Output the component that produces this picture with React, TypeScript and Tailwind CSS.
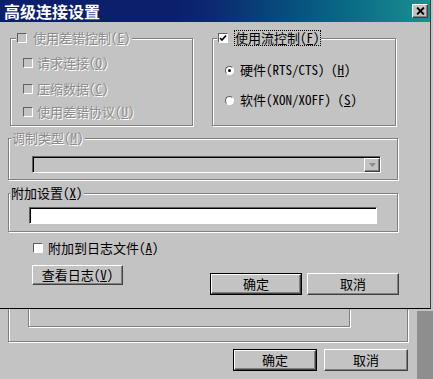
import type { ReactNode } from 'react';

const cjk = '[font-family:"Noto_Sans_Mono_CJK_SC","Noto_Sans_CJK_SC",sans-serif]';
const disabledText = 'text-[#8c8c8c] [text-shadow:1px_1px_0_#ffffff]';
const etched = 'border border-[#808080] shadow-[inset_1px_1px_0_#ffffff,1px_1px_0_#ffffff]';
const raised =
  'border border-t-white border-l-white border-r-[#404040] border-b-[#404040] shadow-[inset_-1px_-1px_0_#808080]';

function Key({ k }: { k: string }) {
  return (
    <>
      (<span className="underline">{k}</span>)
    </>
  );
}

function Check({ checked = false, disabled = false }: { checked?: boolean; disabled?: boolean }) {
  return (
    <span
      className={`relative inline-block h-[10px] w-[10px] shrink-0 border border-t-[#606060] border-l-[#606060] border-r-white border-b-white ${
        disabled ? 'bg-[#c3c3c3]' : 'bg-white'
      }`}
    >
      {checked ? (
        <svg viewBox="0 0 8 8" className="absolute inset-0 h-full w-full">
          <path d="M1 4 L3 6 L7 1.5" stroke="#000" strokeWidth="1.6" fill="none" />
        </svg>
      ) : null}
    </span>
  );
}

function Radio({ on = false }: { on?: boolean }) {
  return (
    <span className="relative inline-flex h-[9px] w-[9px] shrink-0 items-center justify-center rounded-full border border-t-[#606060] border-l-[#606060] border-r-white border-b-white bg-white">
      {on ? <span className="h-[3px] w-[3px] rounded-full bg-black" /> : null}
    </span>
  );
}

function Button({
  children,
  primary = false,
  className = '',
}: {
  children: ReactNode;
  primary?: boolean;
  className?: string;
}) {
  return (
    <div className={`${primary ? 'border border-black' : ''} ${className}`}>
      <button
        type="button"
        className={`flex h-full w-full items-center justify-center bg-[#c3c3c3] text-[13px] text-black ${raised}`}
      >
        {children}
      </button>
    </div>
  );
}

export default function App() {
  return (
    <div className={`flex h-[379px] w-[433px] flex-col overflow-hidden bg-[#c3c3c3] ${cjk}`}>
      {/* front dialog */}
      <div className="flex h-[309px] w-[431px] shrink-0 flex-col border-r border-b border-r-[#404040] border-b-black bg-[#c3c3c3]">
        <div className="flex h-[22px] shrink-0 items-center justify-between bg-gradient-to-r from-[#0b1f6c] from-40% via-[#0c2a72] to-[#1a9090] pl-[4px] pr-[2px]">
          <span className="text-[16px] leading-none font-bold text-white">高级连接设置</span>
          <span
            className={`flex h-[14px] w-[16px] items-center justify-center bg-[#c3c3c3] ${raised}`}
          >
            <svg viewBox="0 0 8 7" className="h-[8px] w-[9px]">
              <path d="M1 0.5 L7 6.5 M7 0.5 L1 6.5" stroke="#000" strokeWidth="1.8" />
            </svg>
          </span>
        </div>

        {/* row 1 */}
        <div className="mt-[9px] flex pl-[10px]">
          <fieldset className={`h-[95px] w-[183px] ${etched}`}>
            <legend className="ml-[5px] flex h-[14px] items-center gap-[6px] bg-[#c3c3c3] px-[1px] text-[13px] leading-[14px]">
              <Check disabled />
              <span className={disabledText}>
                使用差错控制<Key k="E" />
              </span>
            </legend>
            <div className="flex flex-col pl-[12px] text-[13px] leading-[14px]">
              <div className="mt-[11px] flex items-center gap-[4px]">
                <Check disabled />
                <span className={disabledText}>
                  请求连接<Key k="Q" />
                </span>
              </div>
              <div className="mt-[12px] flex items-center gap-[4px]">
                <Check disabled />
                <span className={disabledText}>
                  压缩数据<Key k="C" />
                </span>
              </div>
              <div className="mt-[9px] flex items-center gap-[4px]">
                <Check disabled />
                <span className={disabledText}>
                  使用差错协议<Key k="U" />
                </span>
              </div>
            </div>
          </fieldset>

          <fieldset className={`ml-[19px] h-[95px] w-[184px] ${etched}`}>
            <legend className="ml-[4px] flex h-[14px] items-center gap-[7px] bg-[#c3c3c3] px-[1px] text-[13px] leading-[14px] text-black">
              <Check checked />
              <span className="outline-1 outline-dotted outline-black">
                使用流控制<Key k="F" />
              </span>
            </legend>
            <div className="flex flex-col pl-[12px] text-[13px] leading-[14px] text-black">
              <div className="mt-[18px] flex items-center gap-[6px]">
                <Radio on />
                <span>
                  硬件(RTS/CTS) <Key k="H" />
                </span>
              </div>
              <div className="mt-[16px] flex items-center gap-[6px]">
                <Radio />
                <span>
                  软件(XON/XOFF) <Key k="S" />
                </span>
              </div>
            </div>
          </fieldset>
        </div>

        {/* modulation */}
        <fieldset className={`mt-[5px] ml-[8px] h-[49px] w-[390px] ${etched}`}>
          <legend className="ml-[2px] h-[14px] bg-[#c3c3c3] px-[1px] text-[13px] leading-[14px]">
            <span className={disabledText}>
              调制类型<Key k="M" />
            </span>
          </legend>
          <div className="mt-[11px] ml-[23px] flex h-[17px] w-[349px] border border-t-[#606060] border-l-[#606060] border-r-white border-b-white bg-[#c3c3c3] shadow-[inset_1px_1px_0_#000]">
            <div className="flex-1" />
            <div className={`mt-[1px] flex h-[14px] w-[16px] items-center justify-center bg-[#c3c3c3] ${raised}`}>
              <svg viewBox="0 0 7 4" className="h-[4px] w-[7px]">
                <path d="M0 0 H7 L3.5 4 Z" fill="#8c8c8c" />
              </svg>
            </div>
          </div>
        </fieldset>

        {/* extra settings */}
        <fieldset className={`mt-[6px] ml-[8px] h-[46px] w-[390px] ${etched}`}>
          <legend className="ml-[1px] h-[14px] bg-[#c3c3c3] px-[1px] text-[13px] leading-[14px] text-black">
            附加设置<Key k="X" />
          </legend>
          <div className="mt-[7px] ml-[20px] h-[17px] w-[348px] border border-t-[#606060] border-l-[#606060] border-r-white border-b-white bg-white shadow-[inset_1px_1px_0_#000]" />
        </fieldset>

        <div className="mt-[9px] ml-[33px] flex h-[14px] items-center gap-[5px] text-[13px] leading-[14px] text-black">
          <Check />
          <span>
            附加到日志文件<Key k="A" />
          </span>
        </div>

        <div className="mt-[10px] flex items-start pl-[32px]">
          <Button className="h-[20px] w-[91px]">
            查看日志<Key k="V" />
          </Button>
          <Button primary className="mt-[8px] ml-[87px] h-[22px] w-[92px]">
            确定
          </Button>
          <Button className="mt-[8px] ml-[5px] h-[22px] w-[92px]">取消</Button>
        </div>
      </div>

      {/* parent window behind */}
      <div className="flex flex-1">
        <div className="flex w-[417px] flex-col">
          <div className="ml-[8px] h-[33px] w-[400px] border-r border-b border-l border-[#808080] shadow-[inset_1px_0_0_#ffffff,1px_1px_0_#ffffff]">
            <div className="ml-[19px] h-[18px] w-[322px] border-r border-b border-l border-[#808080] shadow-[inset_1px_0_0_#ffffff,1px_1px_0_#ffffff]" />
          </div>
          <div className="mt-[7px] flex pl-[233px]">
            <Button primary className="h-[22px] w-[84px]">
              确定
            </Button>
            <Button className="ml-[7px] h-[22px] w-[84px]">取消</Button>
          </div>
        </div>
        <div className="mt-[2px] flex-1 bg-[#8e8e8e]" />
      </div>
    </div>
  );
}
